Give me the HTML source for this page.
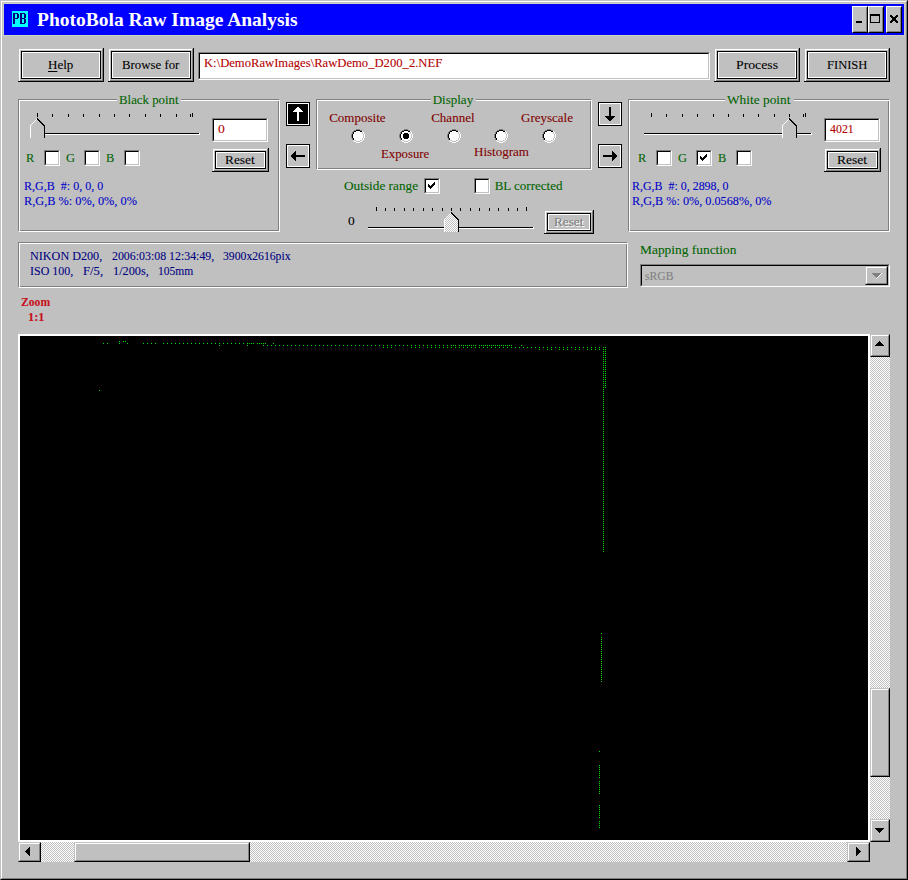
<!DOCTYPE html>
<html><head><meta charset="utf-8">
<style>
*{margin:0;padding:0;box-sizing:border-box}
html,body{width:908px;height:880px;overflow:hidden;background:#c0c0c0}
body{position:relative;font-family:"Liberation Serif",serif;font-size:13px}
.a{position:absolute}
.t{position:absolute;white-space:pre;line-height:15px;font-size:13px;transform-origin:0 0;-webkit-text-stroke:0.1px currentColor}
.bt{position:absolute}
.bt .s{position:absolute;left:0;top:0;right:0;bottom:0;border-right:1px solid #000;border-bottom:1px solid #000}
.bt .g{position:absolute;left:1px;top:1px;right:1px;bottom:1px;border-right:1px solid #808080;border-bottom:1px solid #808080}
.bt .w{position:absolute;left:1px;top:1px;right:2px;bottom:1px;border-left:1px solid #fff;border-top:1px solid #fff}
.bt .k{position:absolute;left:3px;top:3px;right:3px;bottom:3px;border:1px solid #000}
.bt .i{position:absolute;left:4px;top:4px;right:4px;bottom:4px;border:1px solid #fff}
.sk{position:absolute;border-top:1px solid #808080;border-left:1px solid #808080;border-right:1px solid #fff;border-bottom:1px solid #fff}
.sk>.in{position:absolute;left:0;top:0;right:0;bottom:0;border-top:1px solid #000;border-left:1px solid #000;border-right:1px solid #c0c0c0;border-bottom:1px solid #c0c0c0;background:#fff}
.chk{background-image:conic-gradient(#fff 25%,#c0c0c0 0 50%,#fff 0 75%,#c0c0c0 0);background-size:2px 2px}
</style></head><body>
<svg width="0" height="0" style="position:absolute"><defs><pattern id="dith" width="2" height="2" patternUnits="userSpaceOnUse"><rect width="2" height="2" fill="#fff"/><rect width="1" height="1" fill="#c0c0c0"/><rect x="1" y="1" width="1" height="1" fill="#c0c0c0"/></pattern></defs></svg>
<div class="a" style="left:0;top:0;width:908px;height:880px;border-style:solid;border-width:1px;border-color:#c0c0c0 #000 #000 #c0c0c0"></div>
<div class="a" style="left:1px;top:1px;width:906px;height:878px;border-style:solid;border-width:1px;border-color:#fff #808080 #808080 #fff"></div>
<div class="a" style="left:3px;top:3px;width:902px;height:33px;border:1px solid #d0d0c0"></div>
<div class="a" style="left:4px;top:4px;width:900px;height:31px;background:#0000ff"></div>
<div class="a" style="left:12px;top:11px;width:16px;height:16px;background:#00ffff"></div>
<svg class="a" style="left:12px;top:11px" width="16" height="16" viewBox="0 0 16 16" shape-rendering="crispEdges" fill="#000080"><rect x="1" y="2" width="5" height="1"/><rect x="1" y="3" width="2" height="10"/><rect x="5" y="3" width="2" height="4"/><rect x="1" y="7" width="5" height="1"/><rect x="8" y="2" width="5" height="1"/><rect x="8" y="3" width="2" height="10"/><rect x="12" y="3" width="2" height="4"/><rect x="8" y="7" width="5" height="1"/><rect x="12" y="8" width="2" height="4"/><rect x="8" y="12" width="5" height="1"/></svg>
<div class="t" style="left:37px;top:10px;color:#fff;font-weight:bold;font-size:19.5px;line-height:20px;-webkit-text-stroke:0">PhotoBola Raw Image Analysis</div>
<div class="a" style="left:852px;top:6px;width:16px;height:27px;background:#c0c0c0;border-style:solid;border-width:1px;border-color:#fff #000 #000 #fff"></div>
<div class="a" style="left:853px;top:7px;width:14px;height:25px;border-style:solid;border-width:1px;border-color:#c0c0c0 #808080 #808080 #c0c0c0"></div>
<div class="a" style="left:868px;top:6px;width:16px;height:27px;background:#c0c0c0;border-style:solid;border-width:1px;border-color:#fff #000 #000 #fff"></div>
<div class="a" style="left:869px;top:7px;width:14px;height:25px;border-style:solid;border-width:1px;border-color:#c0c0c0 #808080 #808080 #c0c0c0"></div>
<div class="a" style="left:886px;top:6px;width:16px;height:27px;background:#c0c0c0;border-style:solid;border-width:1px;border-color:#fff #000 #000 #fff"></div>
<div class="a" style="left:887px;top:7px;width:14px;height:25px;border-style:solid;border-width:1px;border-color:#c0c0c0 #808080 #808080 #c0c0c0"></div>
<div class="a" style="left:856px;top:21px;width:6px;height:2px;background:#000"></div>
<div class="a" style="left:870px;top:14px;width:10px;height:9px;border:1px solid #000;border-top-width:2px"></div>
<svg class="a" style="left:890px;top:15px" width="8" height="8" viewBox="0 0 8 8" shape-rendering="crispEdges"><path d="M0 0h2v1h1v1h2v-1h1v-1h2v2h-1v1h-1v2h1v1h1v2h-2v-1h-1v-1h-2v1h-1v1h-2v-2h1v-1h1v-2h-1v-1h-1z" fill="#000"/></svg>
<div class="bt" style="left:18px;top:48px;width:86px;height:34px"><div class="s"></div><div class="g"></div><div class="w"></div><div class="k"></div><div class="i"></div></div>
<div class="bt" style="left:108px;top:48px;width:86px;height:34px"><div class="s"></div><div class="g"></div><div class="w"></div><div class="k"></div><div class="i"></div></div>
<div class="sk" style="left:198px;top:52px;width:512px;height:28px"><div class="in" style="background:#fff"></div></div>
<div class="bt" style="left:714px;top:48px;width:86px;height:34px"><div class="s"></div><div class="g"></div><div class="w"></div><div class="k"></div><div class="i"></div></div>
<div class="bt" style="left:804px;top:48px;width:86px;height:34px"><div class="s"></div><div class="g"></div><div class="w"></div><div class="k"></div><div class="i"></div></div>
<div class="a" style="left:18px;top:99px;width:261px;height:132px;border:1px solid #808080"></div>
<div class="a" style="left:19px;top:100px;width:261px;height:132px;border:1px solid #fff"></div>
<div class="a" style="left:117px;top:99px;width:64px;height:3px;background:#c0c0c0"></div>
<div class="a" style="left:37px;top:113px;width:1px;height:4px;background:#000"></div>
<div class="a" style="left:52px;top:114px;width:1px;height:3px;background:#000"></div>
<div class="a" style="left:68px;top:114px;width:1px;height:3px;background:#000"></div>
<div class="a" style="left:83px;top:114px;width:1px;height:3px;background:#000"></div>
<div class="a" style="left:99px;top:114px;width:1px;height:3px;background:#000"></div>
<div class="a" style="left:114px;top:114px;width:1px;height:3px;background:#000"></div>
<div class="a" style="left:129px;top:114px;width:1px;height:3px;background:#000"></div>
<div class="a" style="left:145px;top:114px;width:1px;height:3px;background:#000"></div>
<div class="a" style="left:160px;top:114px;width:1px;height:3px;background:#000"></div>
<div class="a" style="left:176px;top:114px;width:1px;height:3px;background:#000"></div>
<div class="a" style="left:190px;top:114px;width:1px;height:3px;background:#000"></div>
<div class="a" style="left:192px;top:113px;width:1px;height:4px;background:#000"></div>
<div class="a" style="left:34px;top:133px;width:165px;height:1px;background:#000"></div>
<div class="a" style="left:34px;top:134px;width:166px;height:1px;background:#fff"></div>
<div class="a" style="left:199px;top:133px;width:1px;height:1px;background:#fff"></div>
<svg class="a" style="left:30px;top:118px" width="15" height="20" viewBox="0 0 15 20" shape-rendering="crispEdges">
<path d="M7 0h1v1h1v1h1v1h1v1h1v1h1v1h1v1h1v13h-14v-13h1v-1h1v-1h1v-1h1v-1h1v-1h1v-1h1z" fill="#c0c0c0"/>
<path d="M6 1h1v1h-1v1h-1v1h-1v1h-1v1h-1v1h-1v13h-1v-13h1v-1h1v-1h1v-1h1v-1h1v-1h1z" fill="#fff"/>
<path d="M7 0h1v1h1v1h1v1h1v1h1v1h1v1h1v1h1v13h-1v-12h-1v-1h-1v-1h-1v-1h-1v-1h-1v-1h-1z" fill="#000"/>
</svg>
<div class="sk" style="left:212px;top:118px;width:56px;height:24px"><div class="in" style="background:#fff"></div></div>
<div class="bt" style="left:212px;top:148px;width:57px;height:24px"><div class="s"></div><div class="g"></div><div class="w"></div><div class="k"></div><div class="i"></div></div>
<div class="a" style="left:44px;top:150px;width:16px;height:16px;border-style:solid;border-width:1px;border-color:#808080 #fff #fff #808080"></div>
<div class="a" style="left:45px;top:151px;width:14px;height:14px;background:#fff;border-style:solid;border-width:1px;border-color:#000 #c0c0c0 #c0c0c0 #000"></div>
<div class="a" style="left:84px;top:150px;width:16px;height:16px;border-style:solid;border-width:1px;border-color:#808080 #fff #fff #808080"></div>
<div class="a" style="left:85px;top:151px;width:14px;height:14px;background:#fff;border-style:solid;border-width:1px;border-color:#000 #c0c0c0 #c0c0c0 #000"></div>
<div class="a" style="left:124px;top:150px;width:16px;height:16px;border-style:solid;border-width:1px;border-color:#808080 #fff #fff #808080"></div>
<div class="a" style="left:125px;top:151px;width:14px;height:14px;background:#fff;border-style:solid;border-width:1px;border-color:#000 #c0c0c0 #c0c0c0 #000"></div>
<div class="a" style="left:286px;top:102px;width:24px;height:24px;border:1px solid #000;background:#000"></div>
<div class="a" style="left:287px;top:103px;width:22px;height:22px;border:1px solid #fff"></div>
<svg class="a" style="left:286px;top:102px" width="24" height="24" viewBox="0 0 24 24" shape-rendering="crispEdges"><path d="M11 5h2v1h1v1h1v1h1v1h1v1h-4v9h-2v-9h-4v-1h1v-1h1v-1h1v-1h1z" fill="#fff"/></svg>
<div class="a" style="left:286px;top:144px;width:24px;height:24px;border:1px solid #000;background:#c0c0c0"></div>
<div class="a" style="left:287px;top:145px;width:22px;height:22px;border:1px solid #fff"></div>
<svg class="a" style="left:286px;top:144px" width="24" height="24" viewBox="0 0 24 24" shape-rendering="crispEdges"><path d="M5 11h1v-1h1v-1h1v-1h1v-1h1v4h9v2h-9v4h-1v-1h-1v-1h-1v-1h-1v-1h-1z" fill="#000"/></svg>
<div class="a" style="left:598px;top:102px;width:24px;height:24px;border:1px solid #000;background:#c0c0c0"></div>
<div class="a" style="left:599px;top:103px;width:22px;height:22px;border:1px solid #fff"></div>
<svg class="a" style="left:598px;top:102px" width="24" height="24" viewBox="0 0 24 24" shape-rendering="crispEdges"><path d="M11 5h2v9h4v1h-1v1h-1v1h-1v1h-1v1h-2v-1h-1v-1h-1v-1h-1v-1h-1v-1h4z" fill="#000"/></svg>
<div class="a" style="left:598px;top:144px;width:24px;height:24px;border:1px solid #000;background:#c0c0c0"></div>
<div class="a" style="left:599px;top:145px;width:22px;height:22px;border:1px solid #fff"></div>
<svg class="a" style="left:598px;top:144px" width="24" height="24" viewBox="0 0 24 24" shape-rendering="crispEdges"><path d="M5 11h9v-4h1v1h1v1h1v1h1v1h1v2h-1v1h-1v1h-1v1h-1v1h-1v-4h-9z" fill="#000"/></svg>
<div class="a" style="left:316px;top:99px;width:275px;height:70px;border:1px solid #808080"></div>
<div class="a" style="left:317px;top:100px;width:275px;height:70px;border:1px solid #fff"></div>
<div class="a" style="left:431px;top:99px;width:45px;height:3px;background:#c0c0c0"></div>
<svg class="a" style="left:351px;top:129px" width="14" height="14" viewBox="0 0 14 14" shape-rendering="crispEdges"><rect x="5" y="0" width="1" height="1" fill="#808080"/><rect x="6" y="0" width="1" height="1" fill="#808080"/><rect x="7" y="0" width="1" height="1" fill="#808080"/><rect x="8" y="0" width="1" height="1" fill="#808080"/><rect x="3" y="1" width="1" height="1" fill="#808080"/><rect x="4" y="1" width="1" height="1" fill="#808080"/><rect x="9" y="1" width="1" height="1" fill="#808080"/><rect x="10" y="1" width="1" height="1" fill="#808080"/><rect x="2" y="2" width="1" height="1" fill="#808080"/><rect x="11" y="2" width="1" height="1" fill="#fff"/><rect x="1" y="3" width="1" height="1" fill="#808080"/><rect x="12" y="3" width="1" height="1" fill="#fff"/><rect x="1" y="4" width="1" height="1" fill="#808080"/><rect x="12" y="4" width="1" height="1" fill="#fff"/><rect x="0" y="5" width="1" height="1" fill="#808080"/><rect x="13" y="5" width="1" height="1" fill="#fff"/><rect x="0" y="6" width="1" height="1" fill="#808080"/><rect x="13" y="6" width="1" height="1" fill="#fff"/><rect x="0" y="7" width="1" height="1" fill="#808080"/><rect x="13" y="7" width="1" height="1" fill="#fff"/><rect x="0" y="8" width="1" height="1" fill="#808080"/><rect x="13" y="8" width="1" height="1" fill="#fff"/><rect x="1" y="9" width="1" height="1" fill="#808080"/><rect x="12" y="9" width="1" height="1" fill="#fff"/><rect x="1" y="10" width="1" height="1" fill="#808080"/><rect x="12" y="10" width="1" height="1" fill="#fff"/><rect x="2" y="11" width="1" height="1" fill="#fff"/><rect x="11" y="11" width="1" height="1" fill="#fff"/><rect x="3" y="12" width="1" height="1" fill="#fff"/><rect x="4" y="12" width="1" height="1" fill="#fff"/><rect x="9" y="12" width="1" height="1" fill="#fff"/><rect x="10" y="12" width="1" height="1" fill="#fff"/><rect x="5" y="13" width="1" height="1" fill="#fff"/><rect x="6" y="13" width="1" height="1" fill="#fff"/><rect x="7" y="13" width="1" height="1" fill="#fff"/><rect x="8" y="13" width="1" height="1" fill="#fff"/><path d="M5 2h4v1h2v2h1v4h-1v2h-2v1h-4v-1h-2v-2h-1v-4h1v-2h2z" fill="#fff"/><rect x="5" y="1" width="1" height="1" fill="#000"/><rect x="6" y="1" width="1" height="1" fill="#000"/><rect x="7" y="1" width="1" height="1" fill="#000"/><rect x="8" y="1" width="1" height="1" fill="#000"/><rect x="3" y="2" width="1" height="1" fill="#000"/><rect x="4" y="2" width="1" height="1" fill="#000"/><rect x="9" y="2" width="1" height="1" fill="#000"/><rect x="10" y="2" width="1" height="1" fill="#000"/><rect x="2" y="3" width="1" height="1" fill="#000"/><rect x="11" y="3" width="1" height="1" fill="#c0c0c0"/><rect x="2" y="4" width="1" height="1" fill="#000"/><rect x="11" y="4" width="1" height="1" fill="#c0c0c0"/><rect x="1" y="5" width="1" height="1" fill="#000"/><rect x="12" y="5" width="1" height="1" fill="#c0c0c0"/><rect x="1" y="6" width="1" height="1" fill="#000"/><rect x="12" y="6" width="1" height="1" fill="#c0c0c0"/><rect x="1" y="7" width="1" height="1" fill="#000"/><rect x="12" y="7" width="1" height="1" fill="#c0c0c0"/><rect x="1" y="8" width="1" height="1" fill="#000"/><rect x="12" y="8" width="1" height="1" fill="#c0c0c0"/><rect x="2" y="9" width="1" height="1" fill="#000"/><rect x="11" y="9" width="1" height="1" fill="#c0c0c0"/><rect x="2" y="10" width="1" height="1" fill="#000"/><rect x="11" y="10" width="1" height="1" fill="#c0c0c0"/><rect x="3" y="11" width="1" height="1" fill="#c0c0c0"/><rect x="4" y="11" width="1" height="1" fill="#c0c0c0"/><rect x="9" y="11" width="1" height="1" fill="#c0c0c0"/><rect x="10" y="11" width="1" height="1" fill="#c0c0c0"/><rect x="5" y="12" width="1" height="1" fill="#c0c0c0"/><rect x="6" y="12" width="1" height="1" fill="#c0c0c0"/><rect x="7" y="12" width="1" height="1" fill="#c0c0c0"/><rect x="8" y="12" width="1" height="1" fill="#c0c0c0"/></svg>
<svg class="a" style="left:399px;top:129px" width="14" height="14" viewBox="0 0 14 14" shape-rendering="crispEdges"><rect x="5" y="0" width="1" height="1" fill="#808080"/><rect x="6" y="0" width="1" height="1" fill="#808080"/><rect x="7" y="0" width="1" height="1" fill="#808080"/><rect x="8" y="0" width="1" height="1" fill="#808080"/><rect x="3" y="1" width="1" height="1" fill="#808080"/><rect x="4" y="1" width="1" height="1" fill="#808080"/><rect x="9" y="1" width="1" height="1" fill="#808080"/><rect x="10" y="1" width="1" height="1" fill="#808080"/><rect x="2" y="2" width="1" height="1" fill="#808080"/><rect x="11" y="2" width="1" height="1" fill="#fff"/><rect x="1" y="3" width="1" height="1" fill="#808080"/><rect x="12" y="3" width="1" height="1" fill="#fff"/><rect x="1" y="4" width="1" height="1" fill="#808080"/><rect x="12" y="4" width="1" height="1" fill="#fff"/><rect x="0" y="5" width="1" height="1" fill="#808080"/><rect x="13" y="5" width="1" height="1" fill="#fff"/><rect x="0" y="6" width="1" height="1" fill="#808080"/><rect x="13" y="6" width="1" height="1" fill="#fff"/><rect x="0" y="7" width="1" height="1" fill="#808080"/><rect x="13" y="7" width="1" height="1" fill="#fff"/><rect x="0" y="8" width="1" height="1" fill="#808080"/><rect x="13" y="8" width="1" height="1" fill="#fff"/><rect x="1" y="9" width="1" height="1" fill="#808080"/><rect x="12" y="9" width="1" height="1" fill="#fff"/><rect x="1" y="10" width="1" height="1" fill="#808080"/><rect x="12" y="10" width="1" height="1" fill="#fff"/><rect x="2" y="11" width="1" height="1" fill="#fff"/><rect x="11" y="11" width="1" height="1" fill="#fff"/><rect x="3" y="12" width="1" height="1" fill="#fff"/><rect x="4" y="12" width="1" height="1" fill="#fff"/><rect x="9" y="12" width="1" height="1" fill="#fff"/><rect x="10" y="12" width="1" height="1" fill="#fff"/><rect x="5" y="13" width="1" height="1" fill="#fff"/><rect x="6" y="13" width="1" height="1" fill="#fff"/><rect x="7" y="13" width="1" height="1" fill="#fff"/><rect x="8" y="13" width="1" height="1" fill="#fff"/><path d="M5 2h4v1h2v2h1v4h-1v2h-2v1h-4v-1h-2v-2h-1v-4h1v-2h2z" fill="#fff"/><rect x="5" y="1" width="1" height="1" fill="#000"/><rect x="6" y="1" width="1" height="1" fill="#000"/><rect x="7" y="1" width="1" height="1" fill="#000"/><rect x="8" y="1" width="1" height="1" fill="#000"/><rect x="3" y="2" width="1" height="1" fill="#000"/><rect x="4" y="2" width="1" height="1" fill="#000"/><rect x="9" y="2" width="1" height="1" fill="#000"/><rect x="10" y="2" width="1" height="1" fill="#000"/><rect x="2" y="3" width="1" height="1" fill="#000"/><rect x="11" y="3" width="1" height="1" fill="#c0c0c0"/><rect x="2" y="4" width="1" height="1" fill="#000"/><rect x="11" y="4" width="1" height="1" fill="#c0c0c0"/><rect x="1" y="5" width="1" height="1" fill="#000"/><rect x="12" y="5" width="1" height="1" fill="#c0c0c0"/><rect x="1" y="6" width="1" height="1" fill="#000"/><rect x="12" y="6" width="1" height="1" fill="#c0c0c0"/><rect x="1" y="7" width="1" height="1" fill="#000"/><rect x="12" y="7" width="1" height="1" fill="#c0c0c0"/><rect x="1" y="8" width="1" height="1" fill="#000"/><rect x="12" y="8" width="1" height="1" fill="#c0c0c0"/><rect x="2" y="9" width="1" height="1" fill="#000"/><rect x="11" y="9" width="1" height="1" fill="#c0c0c0"/><rect x="2" y="10" width="1" height="1" fill="#000"/><rect x="11" y="10" width="1" height="1" fill="#c0c0c0"/><rect x="3" y="11" width="1" height="1" fill="#c0c0c0"/><rect x="4" y="11" width="1" height="1" fill="#c0c0c0"/><rect x="9" y="11" width="1" height="1" fill="#c0c0c0"/><rect x="10" y="11" width="1" height="1" fill="#c0c0c0"/><rect x="5" y="12" width="1" height="1" fill="#c0c0c0"/><rect x="6" y="12" width="1" height="1" fill="#c0c0c0"/><rect x="7" y="12" width="1" height="1" fill="#c0c0c0"/><rect x="8" y="12" width="1" height="1" fill="#c0c0c0"/><path d="M5 4h4v1h1v4h-1v1h-4v-1h-1v-4h1z" fill="#000"/></svg>
<svg class="a" style="left:447px;top:129px" width="14" height="14" viewBox="0 0 14 14" shape-rendering="crispEdges"><rect x="5" y="0" width="1" height="1" fill="#808080"/><rect x="6" y="0" width="1" height="1" fill="#808080"/><rect x="7" y="0" width="1" height="1" fill="#808080"/><rect x="8" y="0" width="1" height="1" fill="#808080"/><rect x="3" y="1" width="1" height="1" fill="#808080"/><rect x="4" y="1" width="1" height="1" fill="#808080"/><rect x="9" y="1" width="1" height="1" fill="#808080"/><rect x="10" y="1" width="1" height="1" fill="#808080"/><rect x="2" y="2" width="1" height="1" fill="#808080"/><rect x="11" y="2" width="1" height="1" fill="#fff"/><rect x="1" y="3" width="1" height="1" fill="#808080"/><rect x="12" y="3" width="1" height="1" fill="#fff"/><rect x="1" y="4" width="1" height="1" fill="#808080"/><rect x="12" y="4" width="1" height="1" fill="#fff"/><rect x="0" y="5" width="1" height="1" fill="#808080"/><rect x="13" y="5" width="1" height="1" fill="#fff"/><rect x="0" y="6" width="1" height="1" fill="#808080"/><rect x="13" y="6" width="1" height="1" fill="#fff"/><rect x="0" y="7" width="1" height="1" fill="#808080"/><rect x="13" y="7" width="1" height="1" fill="#fff"/><rect x="0" y="8" width="1" height="1" fill="#808080"/><rect x="13" y="8" width="1" height="1" fill="#fff"/><rect x="1" y="9" width="1" height="1" fill="#808080"/><rect x="12" y="9" width="1" height="1" fill="#fff"/><rect x="1" y="10" width="1" height="1" fill="#808080"/><rect x="12" y="10" width="1" height="1" fill="#fff"/><rect x="2" y="11" width="1" height="1" fill="#fff"/><rect x="11" y="11" width="1" height="1" fill="#fff"/><rect x="3" y="12" width="1" height="1" fill="#fff"/><rect x="4" y="12" width="1" height="1" fill="#fff"/><rect x="9" y="12" width="1" height="1" fill="#fff"/><rect x="10" y="12" width="1" height="1" fill="#fff"/><rect x="5" y="13" width="1" height="1" fill="#fff"/><rect x="6" y="13" width="1" height="1" fill="#fff"/><rect x="7" y="13" width="1" height="1" fill="#fff"/><rect x="8" y="13" width="1" height="1" fill="#fff"/><path d="M5 2h4v1h2v2h1v4h-1v2h-2v1h-4v-1h-2v-2h-1v-4h1v-2h2z" fill="#fff"/><rect x="5" y="1" width="1" height="1" fill="#000"/><rect x="6" y="1" width="1" height="1" fill="#000"/><rect x="7" y="1" width="1" height="1" fill="#000"/><rect x="8" y="1" width="1" height="1" fill="#000"/><rect x="3" y="2" width="1" height="1" fill="#000"/><rect x="4" y="2" width="1" height="1" fill="#000"/><rect x="9" y="2" width="1" height="1" fill="#000"/><rect x="10" y="2" width="1" height="1" fill="#000"/><rect x="2" y="3" width="1" height="1" fill="#000"/><rect x="11" y="3" width="1" height="1" fill="#c0c0c0"/><rect x="2" y="4" width="1" height="1" fill="#000"/><rect x="11" y="4" width="1" height="1" fill="#c0c0c0"/><rect x="1" y="5" width="1" height="1" fill="#000"/><rect x="12" y="5" width="1" height="1" fill="#c0c0c0"/><rect x="1" y="6" width="1" height="1" fill="#000"/><rect x="12" y="6" width="1" height="1" fill="#c0c0c0"/><rect x="1" y="7" width="1" height="1" fill="#000"/><rect x="12" y="7" width="1" height="1" fill="#c0c0c0"/><rect x="1" y="8" width="1" height="1" fill="#000"/><rect x="12" y="8" width="1" height="1" fill="#c0c0c0"/><rect x="2" y="9" width="1" height="1" fill="#000"/><rect x="11" y="9" width="1" height="1" fill="#c0c0c0"/><rect x="2" y="10" width="1" height="1" fill="#000"/><rect x="11" y="10" width="1" height="1" fill="#c0c0c0"/><rect x="3" y="11" width="1" height="1" fill="#c0c0c0"/><rect x="4" y="11" width="1" height="1" fill="#c0c0c0"/><rect x="9" y="11" width="1" height="1" fill="#c0c0c0"/><rect x="10" y="11" width="1" height="1" fill="#c0c0c0"/><rect x="5" y="12" width="1" height="1" fill="#c0c0c0"/><rect x="6" y="12" width="1" height="1" fill="#c0c0c0"/><rect x="7" y="12" width="1" height="1" fill="#c0c0c0"/><rect x="8" y="12" width="1" height="1" fill="#c0c0c0"/></svg>
<svg class="a" style="left:494px;top:129px" width="14" height="14" viewBox="0 0 14 14" shape-rendering="crispEdges"><rect x="5" y="0" width="1" height="1" fill="#808080"/><rect x="6" y="0" width="1" height="1" fill="#808080"/><rect x="7" y="0" width="1" height="1" fill="#808080"/><rect x="8" y="0" width="1" height="1" fill="#808080"/><rect x="3" y="1" width="1" height="1" fill="#808080"/><rect x="4" y="1" width="1" height="1" fill="#808080"/><rect x="9" y="1" width="1" height="1" fill="#808080"/><rect x="10" y="1" width="1" height="1" fill="#808080"/><rect x="2" y="2" width="1" height="1" fill="#808080"/><rect x="11" y="2" width="1" height="1" fill="#fff"/><rect x="1" y="3" width="1" height="1" fill="#808080"/><rect x="12" y="3" width="1" height="1" fill="#fff"/><rect x="1" y="4" width="1" height="1" fill="#808080"/><rect x="12" y="4" width="1" height="1" fill="#fff"/><rect x="0" y="5" width="1" height="1" fill="#808080"/><rect x="13" y="5" width="1" height="1" fill="#fff"/><rect x="0" y="6" width="1" height="1" fill="#808080"/><rect x="13" y="6" width="1" height="1" fill="#fff"/><rect x="0" y="7" width="1" height="1" fill="#808080"/><rect x="13" y="7" width="1" height="1" fill="#fff"/><rect x="0" y="8" width="1" height="1" fill="#808080"/><rect x="13" y="8" width="1" height="1" fill="#fff"/><rect x="1" y="9" width="1" height="1" fill="#808080"/><rect x="12" y="9" width="1" height="1" fill="#fff"/><rect x="1" y="10" width="1" height="1" fill="#808080"/><rect x="12" y="10" width="1" height="1" fill="#fff"/><rect x="2" y="11" width="1" height="1" fill="#fff"/><rect x="11" y="11" width="1" height="1" fill="#fff"/><rect x="3" y="12" width="1" height="1" fill="#fff"/><rect x="4" y="12" width="1" height="1" fill="#fff"/><rect x="9" y="12" width="1" height="1" fill="#fff"/><rect x="10" y="12" width="1" height="1" fill="#fff"/><rect x="5" y="13" width="1" height="1" fill="#fff"/><rect x="6" y="13" width="1" height="1" fill="#fff"/><rect x="7" y="13" width="1" height="1" fill="#fff"/><rect x="8" y="13" width="1" height="1" fill="#fff"/><path d="M5 2h4v1h2v2h1v4h-1v2h-2v1h-4v-1h-2v-2h-1v-4h1v-2h2z" fill="#fff"/><rect x="5" y="1" width="1" height="1" fill="#000"/><rect x="6" y="1" width="1" height="1" fill="#000"/><rect x="7" y="1" width="1" height="1" fill="#000"/><rect x="8" y="1" width="1" height="1" fill="#000"/><rect x="3" y="2" width="1" height="1" fill="#000"/><rect x="4" y="2" width="1" height="1" fill="#000"/><rect x="9" y="2" width="1" height="1" fill="#000"/><rect x="10" y="2" width="1" height="1" fill="#000"/><rect x="2" y="3" width="1" height="1" fill="#000"/><rect x="11" y="3" width="1" height="1" fill="#c0c0c0"/><rect x="2" y="4" width="1" height="1" fill="#000"/><rect x="11" y="4" width="1" height="1" fill="#c0c0c0"/><rect x="1" y="5" width="1" height="1" fill="#000"/><rect x="12" y="5" width="1" height="1" fill="#c0c0c0"/><rect x="1" y="6" width="1" height="1" fill="#000"/><rect x="12" y="6" width="1" height="1" fill="#c0c0c0"/><rect x="1" y="7" width="1" height="1" fill="#000"/><rect x="12" y="7" width="1" height="1" fill="#c0c0c0"/><rect x="1" y="8" width="1" height="1" fill="#000"/><rect x="12" y="8" width="1" height="1" fill="#c0c0c0"/><rect x="2" y="9" width="1" height="1" fill="#000"/><rect x="11" y="9" width="1" height="1" fill="#c0c0c0"/><rect x="2" y="10" width="1" height="1" fill="#000"/><rect x="11" y="10" width="1" height="1" fill="#c0c0c0"/><rect x="3" y="11" width="1" height="1" fill="#c0c0c0"/><rect x="4" y="11" width="1" height="1" fill="#c0c0c0"/><rect x="9" y="11" width="1" height="1" fill="#c0c0c0"/><rect x="10" y="11" width="1" height="1" fill="#c0c0c0"/><rect x="5" y="12" width="1" height="1" fill="#c0c0c0"/><rect x="6" y="12" width="1" height="1" fill="#c0c0c0"/><rect x="7" y="12" width="1" height="1" fill="#c0c0c0"/><rect x="8" y="12" width="1" height="1" fill="#c0c0c0"/></svg>
<svg class="a" style="left:542px;top:129px" width="14" height="14" viewBox="0 0 14 14" shape-rendering="crispEdges"><rect x="5" y="0" width="1" height="1" fill="#808080"/><rect x="6" y="0" width="1" height="1" fill="#808080"/><rect x="7" y="0" width="1" height="1" fill="#808080"/><rect x="8" y="0" width="1" height="1" fill="#808080"/><rect x="3" y="1" width="1" height="1" fill="#808080"/><rect x="4" y="1" width="1" height="1" fill="#808080"/><rect x="9" y="1" width="1" height="1" fill="#808080"/><rect x="10" y="1" width="1" height="1" fill="#808080"/><rect x="2" y="2" width="1" height="1" fill="#808080"/><rect x="11" y="2" width="1" height="1" fill="#fff"/><rect x="1" y="3" width="1" height="1" fill="#808080"/><rect x="12" y="3" width="1" height="1" fill="#fff"/><rect x="1" y="4" width="1" height="1" fill="#808080"/><rect x="12" y="4" width="1" height="1" fill="#fff"/><rect x="0" y="5" width="1" height="1" fill="#808080"/><rect x="13" y="5" width="1" height="1" fill="#fff"/><rect x="0" y="6" width="1" height="1" fill="#808080"/><rect x="13" y="6" width="1" height="1" fill="#fff"/><rect x="0" y="7" width="1" height="1" fill="#808080"/><rect x="13" y="7" width="1" height="1" fill="#fff"/><rect x="0" y="8" width="1" height="1" fill="#808080"/><rect x="13" y="8" width="1" height="1" fill="#fff"/><rect x="1" y="9" width="1" height="1" fill="#808080"/><rect x="12" y="9" width="1" height="1" fill="#fff"/><rect x="1" y="10" width="1" height="1" fill="#808080"/><rect x="12" y="10" width="1" height="1" fill="#fff"/><rect x="2" y="11" width="1" height="1" fill="#fff"/><rect x="11" y="11" width="1" height="1" fill="#fff"/><rect x="3" y="12" width="1" height="1" fill="#fff"/><rect x="4" y="12" width="1" height="1" fill="#fff"/><rect x="9" y="12" width="1" height="1" fill="#fff"/><rect x="10" y="12" width="1" height="1" fill="#fff"/><rect x="5" y="13" width="1" height="1" fill="#fff"/><rect x="6" y="13" width="1" height="1" fill="#fff"/><rect x="7" y="13" width="1" height="1" fill="#fff"/><rect x="8" y="13" width="1" height="1" fill="#fff"/><path d="M5 2h4v1h2v2h1v4h-1v2h-2v1h-4v-1h-2v-2h-1v-4h1v-2h2z" fill="#fff"/><rect x="5" y="1" width="1" height="1" fill="#000"/><rect x="6" y="1" width="1" height="1" fill="#000"/><rect x="7" y="1" width="1" height="1" fill="#000"/><rect x="8" y="1" width="1" height="1" fill="#000"/><rect x="3" y="2" width="1" height="1" fill="#000"/><rect x="4" y="2" width="1" height="1" fill="#000"/><rect x="9" y="2" width="1" height="1" fill="#000"/><rect x="10" y="2" width="1" height="1" fill="#000"/><rect x="2" y="3" width="1" height="1" fill="#000"/><rect x="11" y="3" width="1" height="1" fill="#c0c0c0"/><rect x="2" y="4" width="1" height="1" fill="#000"/><rect x="11" y="4" width="1" height="1" fill="#c0c0c0"/><rect x="1" y="5" width="1" height="1" fill="#000"/><rect x="12" y="5" width="1" height="1" fill="#c0c0c0"/><rect x="1" y="6" width="1" height="1" fill="#000"/><rect x="12" y="6" width="1" height="1" fill="#c0c0c0"/><rect x="1" y="7" width="1" height="1" fill="#000"/><rect x="12" y="7" width="1" height="1" fill="#c0c0c0"/><rect x="1" y="8" width="1" height="1" fill="#000"/><rect x="12" y="8" width="1" height="1" fill="#c0c0c0"/><rect x="2" y="9" width="1" height="1" fill="#000"/><rect x="11" y="9" width="1" height="1" fill="#c0c0c0"/><rect x="2" y="10" width="1" height="1" fill="#000"/><rect x="11" y="10" width="1" height="1" fill="#c0c0c0"/><rect x="3" y="11" width="1" height="1" fill="#c0c0c0"/><rect x="4" y="11" width="1" height="1" fill="#c0c0c0"/><rect x="9" y="11" width="1" height="1" fill="#c0c0c0"/><rect x="10" y="11" width="1" height="1" fill="#c0c0c0"/><rect x="5" y="12" width="1" height="1" fill="#c0c0c0"/><rect x="6" y="12" width="1" height="1" fill="#c0c0c0"/><rect x="7" y="12" width="1" height="1" fill="#c0c0c0"/><rect x="8" y="12" width="1" height="1" fill="#c0c0c0"/></svg>
<div class="a" style="left:424px;top:178px;width:16px;height:16px;border-style:solid;border-width:1px;border-color:#808080 #fff #fff #808080"></div>
<div class="a" style="left:425px;top:179px;width:14px;height:14px;background:#fff;border-style:solid;border-width:1px;border-color:#000 #c0c0c0 #c0c0c0 #000"></div>
<svg class="a" style="left:424px;top:178px" width="16" height="16" viewBox="0 0 16 16" shape-rendering="crispEdges" fill="#000"><rect x="4" y="6" width="1" height="3"/><rect x="5" y="7" width="1" height="3"/><rect x="6" y="8" width="1" height="3"/><rect x="7" y="7" width="1" height="3"/><rect x="8" y="6" width="1" height="3"/><rect x="9" y="5" width="1" height="3"/><rect x="10" y="4" width="1" height="3"/></svg>
<div class="a" style="left:474px;top:178px;width:16px;height:16px;border-style:solid;border-width:1px;border-color:#808080 #fff #fff #808080"></div>
<div class="a" style="left:475px;top:179px;width:14px;height:14px;background:#fff;border-style:solid;border-width:1px;border-color:#000 #c0c0c0 #c0c0c0 #000"></div>
<div class="a" style="left:376px;top:207px;width:1px;height:4px;background:#000"></div>
<div class="a" style="left:385px;top:208px;width:1px;height:3px;background:#000"></div>
<div class="a" style="left:394px;top:208px;width:1px;height:3px;background:#000"></div>
<div class="a" style="left:404px;top:208px;width:1px;height:3px;background:#000"></div>
<div class="a" style="left:413px;top:208px;width:1px;height:3px;background:#000"></div>
<div class="a" style="left:423px;top:208px;width:1px;height:3px;background:#000"></div>
<div class="a" style="left:432px;top:208px;width:1px;height:3px;background:#000"></div>
<div class="a" style="left:442px;top:208px;width:1px;height:3px;background:#000"></div>
<div class="a" style="left:451px;top:208px;width:1px;height:3px;background:#000"></div>
<div class="a" style="left:460px;top:208px;width:1px;height:3px;background:#000"></div>
<div class="a" style="left:470px;top:208px;width:1px;height:3px;background:#000"></div>
<div class="a" style="left:479px;top:208px;width:1px;height:3px;background:#000"></div>
<div class="a" style="left:489px;top:208px;width:1px;height:3px;background:#000"></div>
<div class="a" style="left:498px;top:208px;width:1px;height:3px;background:#000"></div>
<div class="a" style="left:508px;top:208px;width:1px;height:3px;background:#000"></div>
<div class="a" style="left:517px;top:208px;width:1px;height:3px;background:#000"></div>
<div class="a" style="left:526px;top:207px;width:1px;height:4px;background:#000"></div>
<div class="a" style="left:368px;top:227px;width:165px;height:1px;background:#000"></div>
<div class="a" style="left:368px;top:228px;width:166px;height:1px;background:#fff"></div>
<div class="a" style="left:533px;top:227px;width:1px;height:1px;background:#fff"></div>
<svg class="a" style="left:444px;top:212px" width="15" height="20" viewBox="0 0 15 20" shape-rendering="crispEdges">
<path d="M7 0h1v1h1v1h1v1h1v1h1v1h1v1h1v1h1v13h-14v-13h1v-1h1v-1h1v-1h1v-1h1v-1h1v-1h1z" fill="url(#dith)"/>
<path d="M6 1h1v1h-1v1h-1v1h-1v1h-1v1h-1v1h-1v13h-1v-13h1v-1h1v-1h1v-1h1v-1h1v-1h1z" fill="#fff"/>
<path d="M7 0h1v1h1v1h1v1h1v1h1v1h1v1h1v1h1v13h-1v-12h-1v-1h-1v-1h-1v-1h-1v-1h-1v-1h-1z" fill="#000"/>
</svg>
<div class="bt" style="left:544px;top:210px;width:50px;height:24px"><div class="s"></div><div class="g"></div><div class="w"></div><div class="k"></div><div class="i"></div></div>
<div class="a" style="left:628px;top:99px;width:261px;height:132px;border:1px solid #808080"></div>
<div class="a" style="left:629px;top:100px;width:261px;height:132px;border:1px solid #fff"></div>
<div class="a" style="left:725px;top:99px;width:69px;height:3px;background:#c0c0c0"></div>
<div class="a" style="left:651px;top:113px;width:1px;height:4px;background:#000"></div>
<div class="a" style="left:666px;top:114px;width:1px;height:3px;background:#000"></div>
<div class="a" style="left:682px;top:114px;width:1px;height:3px;background:#000"></div>
<div class="a" style="left:697px;top:114px;width:1px;height:3px;background:#000"></div>
<div class="a" style="left:713px;top:114px;width:1px;height:3px;background:#000"></div>
<div class="a" style="left:728px;top:114px;width:1px;height:3px;background:#000"></div>
<div class="a" style="left:743px;top:114px;width:1px;height:3px;background:#000"></div>
<div class="a" style="left:758px;top:114px;width:1px;height:3px;background:#000"></div>
<div class="a" style="left:774px;top:114px;width:1px;height:3px;background:#000"></div>
<div class="a" style="left:789px;top:114px;width:1px;height:3px;background:#000"></div>
<div class="a" style="left:803px;top:114px;width:1px;height:3px;background:#000"></div>
<div class="a" style="left:805px;top:113px;width:1px;height:4px;background:#000"></div>
<div class="a" style="left:644px;top:133px;width:167px;height:1px;background:#000"></div>
<div class="a" style="left:644px;top:134px;width:168px;height:1px;background:#fff"></div>
<div class="a" style="left:811px;top:133px;width:1px;height:1px;background:#fff"></div>
<svg class="a" style="left:782px;top:118px" width="15" height="20" viewBox="0 0 15 20" shape-rendering="crispEdges">
<path d="M7 0h1v1h1v1h1v1h1v1h1v1h1v1h1v1h1v13h-14v-13h1v-1h1v-1h1v-1h1v-1h1v-1h1v-1h1z" fill="#c0c0c0"/>
<path d="M6 1h1v1h-1v1h-1v1h-1v1h-1v1h-1v1h-1v13h-1v-13h1v-1h1v-1h1v-1h1v-1h1v-1h1z" fill="#fff"/>
<path d="M7 0h1v1h1v1h1v1h1v1h1v1h1v1h1v1h1v13h-1v-12h-1v-1h-1v-1h-1v-1h-1v-1h-1v-1h-1z" fill="#000"/>
</svg>
<div class="sk" style="left:824px;top:118px;width:56px;height:24px"><div class="in" style="background:#fff"></div></div>
<div class="bt" style="left:824px;top:148px;width:57px;height:24px"><div class="s"></div><div class="g"></div><div class="w"></div><div class="k"></div><div class="i"></div></div>
<div class="a" style="left:656px;top:150px;width:16px;height:16px;border-style:solid;border-width:1px;border-color:#808080 #fff #fff #808080"></div>
<div class="a" style="left:657px;top:151px;width:14px;height:14px;background:#fff;border-style:solid;border-width:1px;border-color:#000 #c0c0c0 #c0c0c0 #000"></div>
<div class="a" style="left:696px;top:150px;width:16px;height:16px;border-style:solid;border-width:1px;border-color:#808080 #fff #fff #808080"></div>
<div class="a" style="left:697px;top:151px;width:14px;height:14px;background:#fff;border-style:solid;border-width:1px;border-color:#000 #c0c0c0 #c0c0c0 #000"></div>
<svg class="a" style="left:696px;top:150px" width="16" height="16" viewBox="0 0 16 16" shape-rendering="crispEdges" fill="#000"><rect x="4" y="6" width="1" height="3"/><rect x="5" y="7" width="1" height="3"/><rect x="6" y="8" width="1" height="3"/><rect x="7" y="7" width="1" height="3"/><rect x="8" y="6" width="1" height="3"/><rect x="9" y="5" width="1" height="3"/><rect x="10" y="4" width="1" height="3"/></svg>
<div class="a" style="left:736px;top:150px;width:16px;height:16px;border-style:solid;border-width:1px;border-color:#808080 #fff #fff #808080"></div>
<div class="a" style="left:737px;top:151px;width:14px;height:14px;background:#fff;border-style:solid;border-width:1px;border-color:#000 #c0c0c0 #c0c0c0 #000"></div>
<div class="a" style="left:18px;top:242px;width:609px;height:45px;border:1px solid #808080"></div>
<div class="a" style="left:19px;top:243px;width:609px;height:45px;border:1px solid #fff"></div>
<div class="sk" style="left:640px;top:264px;width:250px;height:23px"><div class="in" style="background:#c0c0c0"></div></div>
<div class="a" style="left:865px;top:266px;width:23px;height:19px;background:#c0c0c0;border-style:solid;border-width:1px;border-color:#c0c0c0 #000 #000 #c0c0c0"></div>
<div class="a" style="left:866px;top:267px;width:21px;height:17px;border-style:solid;border-width:1px;border-color:#fff #808080 #808080 #fff"></div>
<svg class="a" style="left:871px;top:272px" width="12" height="8" viewBox="0 0 12 8" shape-rendering="crispEdges"><path d="M1 1h9v1h-1v1h-1v1h-1v1h-1v1h-1v-1h-1v-1h-1v-1h-1v-1h-1z" fill="#808080"/><path d="M10 1h1v1h-1v1h-1v1h-1v1h-1v1h-1v1h-1v-1h1v-1h1v-1h1v-1h1v-1h1z" fill="#fff"/></svg>
<div class="a" style="left:18px;top:334px;width:852px;height:508px;background:#fff"></div>
<div class="a" style="left:20px;top:336px;width:848px;height:504px;background:#000"></div>
<svg class="a" style="left:0;top:0" width="908" height="880" viewBox="0 0 908 880" shape-rendering="crispEdges"><path d="M99 390h1v1h-1zM103 343h1v1h-1zM107 343h1v1h-1zM119 341h1v1h-1zM119 343h1v1h-1zM123 341h1v1h-1zM125 341h1v1h-1zM127 343h1v1h-1zM143 343h1v1h-1zM147 343h1v1h-1zM151 343h1v1h-1zM155 343h1v1h-1zM163 343h1v1h-1zM167 343h1v1h-1zM171 343h1v1h-1zM175 343h1v1h-1zM179 343h1v1h-1zM183 343h1v1h-1zM187 343h1v1h-1zM191 343h1v1h-1zM195 343h1v1h-1zM199 343h1v1h-1zM203 343h1v1h-1zM207 343h1v1h-1zM211 343h1v1h-1zM215 343h1v1h-1zM219 343h1v1h-1zM219 345h1v1h-1zM223 343h1v1h-1zM227 343h1v1h-1zM231 343h1v1h-1zM235 343h1v1h-1zM239 343h1v1h-1zM243 343h1v1h-1zM247 343h1v1h-1zM247 345h1v1h-1zM249 343h1v1h-1zM251 343h1v1h-1zM253 343h1v1h-1zM257 343h1v1h-1zM259 343h1v1h-1zM261 343h1v1h-1zM263 343h1v1h-1zM263 345h1v1h-1zM265 343h1v1h-1zM267 345h1v1h-1zM271 345h1v1h-1zM273 343h1v1h-1zM275 345h1v1h-1zM279 345h1v1h-1zM283 345h1v1h-1zM287 345h1v1h-1zM291 345h1v1h-1zM295 345h1v1h-1zM299 345h1v1h-1zM303 345h1v1h-1zM307 345h1v1h-1zM311 345h1v1h-1zM315 345h1v1h-1zM319 345h1v1h-1zM323 345h1v1h-1zM327 345h1v1h-1zM331 345h1v1h-1zM335 345h1v1h-1zM339 345h1v1h-1zM343 345h1v1h-1zM347 345h1v1h-1zM351 345h1v1h-1zM355 345h1v1h-1zM359 345h1v1h-1zM363 345h1v1h-1zM367 345h1v1h-1zM371 345h1v1h-1zM375 345h1v1h-1zM379 345h1v1h-1zM383 345h1v1h-1zM383 347h1v1h-1zM387 345h1v1h-1zM387 347h1v1h-1zM391 345h1v1h-1zM391 347h1v1h-1zM395 345h1v1h-1zM399 345h1v1h-1zM403 345h1v1h-1zM407 345h1v1h-1zM411 345h1v1h-1zM411 347h1v1h-1zM415 345h1v1h-1zM415 347h1v1h-1zM419 345h1v1h-1zM419 347h1v1h-1zM423 345h1v1h-1zM427 345h1v1h-1zM427 347h1v1h-1zM431 345h1v1h-1zM431 347h1v1h-1zM435 345h1v1h-1zM435 347h1v1h-1zM439 345h1v1h-1zM439 347h1v1h-1zM443 345h1v1h-1zM443 347h1v1h-1zM447 345h1v1h-1zM447 347h1v1h-1zM451 345h1v1h-1zM451 347h1v1h-1zM453 345h1v1h-1zM455 345h1v1h-1zM455 347h1v1h-1zM459 345h1v1h-1zM459 347h1v1h-1zM461 345h1v1h-1zM463 345h1v1h-1zM463 347h1v1h-1zM465 345h1v1h-1zM467 345h1v1h-1zM467 347h1v1h-1zM469 345h1v1h-1zM471 345h1v1h-1zM471 347h1v1h-1zM473 345h1v1h-1zM475 345h1v1h-1zM475 347h1v1h-1zM479 345h1v1h-1zM479 347h1v1h-1zM481 345h1v1h-1zM483 345h1v1h-1zM483 347h1v1h-1zM485 345h1v1h-1zM487 345h1v1h-1zM487 347h1v1h-1zM489 345h1v1h-1zM491 345h1v1h-1zM491 347h1v1h-1zM493 345h1v1h-1zM495 345h1v1h-1zM495 347h1v1h-1zM497 345h1v1h-1zM499 345h1v1h-1zM499 347h1v1h-1zM501 345h1v1h-1zM503 345h1v1h-1zM503 347h1v1h-1zM505 345h1v1h-1zM507 345h1v1h-1zM507 347h1v1h-1zM509 345h1v1h-1zM511 345h1v1h-1zM511 347h1v1h-1zM515 347h1v1h-1zM519 347h1v1h-1zM521 345h1v1h-1zM523 347h1v1h-1zM527 347h1v1h-1zM531 347h1v1h-1zM535 347h1v1h-1zM539 347h1v1h-1zM539 349h1v1h-1zM543 347h1v1h-1zM547 347h1v1h-1zM547 349h1v1h-1zM551 347h1v1h-1zM551 349h1v1h-1zM555 347h1v1h-1zM559 347h1v1h-1zM559 349h1v1h-1zM563 347h1v1h-1zM563 349h1v1h-1zM567 347h1v1h-1zM567 349h1v1h-1zM571 347h1v1h-1zM575 347h1v1h-1zM575 349h1v1h-1zM579 347h1v1h-1zM579 349h1v1h-1zM583 347h1v1h-1zM587 347h1v1h-1zM587 349h1v1h-1zM591 347h1v1h-1zM591 349h1v1h-1zM595 347h1v1h-1zM595 349h1v1h-1zM599 347h1v1h-1zM599 349h1v1h-1zM599 751h1v1h-1zM599 765h1v1h-1zM599 767h1v1h-1zM599 769h1v1h-1zM599 771h1v1h-1zM599 773h1v1h-1zM599 775h1v1h-1zM599 777h1v1h-1zM599 781h1v1h-1zM599 783h1v1h-1zM599 785h1v1h-1zM599 787h1v1h-1zM599 789h1v1h-1zM599 791h1v1h-1zM599 793h1v1h-1zM599 805h1v1h-1zM599 807h1v1h-1zM599 809h1v1h-1zM599 811h1v1h-1zM599 813h1v1h-1zM599 815h1v1h-1zM599 817h1v1h-1zM599 821h1v1h-1zM599 823h1v1h-1zM599 825h1v1h-1zM599 827h1v1h-1zM601 633h1v1h-1zM601 637h1v1h-1zM601 639h1v1h-1zM601 641h1v1h-1zM601 643h1v1h-1zM601 645h1v1h-1zM601 647h1v1h-1zM601 649h1v1h-1zM601 651h1v1h-1zM601 653h1v1h-1zM601 655h1v1h-1zM601 657h1v1h-1zM601 659h1v1h-1zM601 661h1v1h-1zM601 663h1v1h-1zM601 665h1v1h-1zM601 667h1v1h-1zM601 669h1v1h-1zM601 671h1v1h-1zM601 673h1v1h-1zM601 675h1v1h-1zM601 677h1v1h-1zM601 679h1v1h-1zM601 681h1v1h-1zM603 347h1v1h-1zM603 349h1v1h-1zM603 351h1v1h-1zM603 353h1v1h-1zM603 355h1v1h-1zM603 357h1v1h-1zM603 359h1v1h-1zM603 361h1v1h-1zM603 363h1v1h-1zM603 365h1v1h-1zM603 367h1v1h-1zM603 369h1v1h-1zM603 371h1v1h-1zM603 373h1v1h-1zM603 375h1v1h-1zM603 377h1v1h-1zM603 379h1v1h-1zM603 381h1v1h-1zM603 383h1v1h-1zM603 385h1v1h-1zM603 387h1v1h-1zM603 389h1v1h-1zM603 391h1v1h-1zM603 393h1v1h-1zM603 395h1v1h-1zM603 397h1v1h-1zM603 399h1v1h-1zM603 401h1v1h-1zM603 403h1v1h-1zM603 405h1v1h-1zM603 407h1v1h-1zM603 409h1v1h-1zM603 411h1v1h-1zM603 413h1v1h-1zM603 415h1v1h-1zM603 417h1v1h-1zM603 419h1v1h-1zM603 421h1v1h-1zM603 423h1v1h-1zM603 425h1v1h-1zM603 427h1v1h-1zM603 429h1v1h-1zM603 431h1v1h-1zM603 433h1v1h-1zM603 435h1v1h-1zM603 437h1v1h-1zM603 439h1v1h-1zM603 441h1v1h-1zM603 443h1v1h-1zM603 445h1v1h-1zM603 447h1v1h-1zM603 449h1v1h-1zM603 451h1v1h-1zM603 453h1v1h-1zM603 455h1v1h-1zM603 457h1v1h-1zM603 459h1v1h-1zM603 461h1v1h-1zM603 463h1v1h-1zM603 465h1v1h-1zM603 467h1v1h-1zM603 469h1v1h-1zM603 471h1v1h-1zM603 473h1v1h-1zM603 475h1v1h-1zM603 477h1v1h-1zM603 479h1v1h-1zM603 481h1v1h-1zM603 483h1v1h-1zM603 485h1v1h-1zM603 487h1v1h-1zM603 489h1v1h-1zM603 491h1v1h-1zM603 493h1v1h-1zM603 495h1v1h-1zM603 497h1v1h-1zM603 499h1v1h-1zM603 501h1v1h-1zM603 503h1v1h-1zM603 505h1v1h-1zM603 507h1v1h-1zM603 509h1v1h-1zM603 511h1v1h-1zM603 513h1v1h-1zM603 515h1v1h-1zM603 517h1v1h-1zM603 519h1v1h-1zM603 521h1v1h-1zM603 523h1v1h-1zM603 525h1v1h-1zM603 527h1v1h-1zM603 529h1v1h-1zM603 531h1v1h-1zM603 533h1v1h-1zM603 535h1v1h-1zM603 537h1v1h-1zM603 539h1v1h-1zM603 541h1v1h-1zM603 543h1v1h-1zM603 545h1v1h-1zM603 547h1v1h-1zM603 549h1v1h-1zM603 551h1v1h-1zM605 347h1v1h-1zM605 349h1v1h-1zM605 351h1v1h-1zM605 353h1v1h-1zM605 355h1v1h-1zM605 357h1v1h-1zM605 359h1v1h-1zM605 361h1v1h-1zM605 363h1v1h-1zM605 365h1v1h-1zM605 367h1v1h-1zM605 369h1v1h-1zM605 371h1v1h-1zM605 373h1v1h-1zM605 375h1v1h-1zM605 377h1v1h-1zM605 379h1v1h-1zM605 381h1v1h-1zM605 383h1v1h-1zM605 385h1v1h-1zM605 387h1v1h-1z" fill="#00e000"/></svg>
<div class="a chk" style="left:870px;top:334px;width:20px;height:508px"></div>
<div class="a" style="left:870px;top:334px;width:20px;height:23px;background:#c0c0c0;border-style:solid;border-width:1px;border-color:#c0c0c0 #000 #000 #c0c0c0"></div>
<div class="a" style="left:871px;top:335px;width:18px;height:21px;border-style:solid;border-width:1px;border-color:#fff #808080 #808080 #fff"></div>
<svg class="a" style="left:875px;top:341px" width="10" height="6" viewBox="0 0 10 6" shape-rendering="crispEdges"><path d="M4 0h1v1h1v1h1v1h1v1h1v1h-9v-1h1v-1h1v-1h1v-1h1z" fill="#000"/></svg>
<div class="a" style="left:870px;top:688px;width:20px;height:89px;background:#c0c0c0;border-style:solid;border-width:1px;border-color:#c0c0c0 #000 #000 #c0c0c0"></div>
<div class="a" style="left:871px;top:689px;width:18px;height:87px;border-style:solid;border-width:1px;border-color:#fff #808080 #808080 #fff"></div>
<div class="a" style="left:870px;top:819px;width:20px;height:23px;background:#c0c0c0;border-style:solid;border-width:1px;border-color:#c0c0c0 #000 #000 #c0c0c0"></div>
<div class="a" style="left:871px;top:820px;width:18px;height:21px;border-style:solid;border-width:1px;border-color:#fff #808080 #808080 #fff"></div>
<svg class="a" style="left:875px;top:828px" width="10" height="6" viewBox="0 0 10 6" shape-rendering="crispEdges"><path d="M0 0h9v1h-1v1h-1v1h-1v1h-1v1h-1v-1h-1v-1h-1v-1h-1v-1h-1z" fill="#000"/></svg>
<div class="a chk" style="left:18px;top:842px;width:852px;height:20px"></div>
<div class="a" style="left:18px;top:842px;width:23px;height:20px;background:#c0c0c0;border-style:solid;border-width:1px;border-color:#c0c0c0 #000 #000 #c0c0c0"></div>
<div class="a" style="left:19px;top:843px;width:21px;height:18px;border-style:solid;border-width:1px;border-color:#fff #808080 #808080 #fff"></div>
<svg class="a" style="left:25px;top:847px" width="6" height="10" viewBox="0 0 6 10" shape-rendering="crispEdges"><path d="M4 0h1v9h-1v-1h-1v-1h-1v-1h-1v-1h-1v-1h1v-1h1v-1h1v-1h1z" fill="#000"/></svg>
<div class="a" style="left:74px;top:842px;width:176px;height:20px;background:#c0c0c0;border-style:solid;border-width:1px;border-color:#c0c0c0 #000 #000 #c0c0c0"></div>
<div class="a" style="left:75px;top:843px;width:174px;height:18px;border-style:solid;border-width:1px;border-color:#fff #808080 #808080 #fff"></div>
<div class="a" style="left:847px;top:842px;width:23px;height:20px;background:#c0c0c0;border-style:solid;border-width:1px;border-color:#c0c0c0 #000 #000 #c0c0c0"></div>
<div class="a" style="left:848px;top:843px;width:21px;height:18px;border-style:solid;border-width:1px;border-color:#fff #808080 #808080 #fff"></div>
<svg class="a" style="left:856px;top:847px" width="6" height="10" viewBox="0 0 6 10" shape-rendering="crispEdges"><path d="M0 0h1v1h1v1h1v1h1v1h1v1h-1v1h-1v1h-1v1h-1v1h-1z" fill="#000"/></svg>
<div class="t" style="left:48.00px;top:57.00px;color:#000"><u style="text-underline-offset:2px">H</u>elp</div>
<div class="t" style="left:122.00px;top:57.00px;color:#000;transform:scaleX(0.9865)">Browse for</div>
<div class="t" style="left:204.00px;top:54.50px;color:#b40000;transform:scaleX(0.9717)">K:\DemoRawImages\RawDemo_D200_2.NEF</div>
<div class="t" style="left:735.60px;top:57.00px;color:#000;transform:scaleX(1.0590)">Process</div>
<div class="t" style="left:827.00px;top:57.00px;color:#000;transform:scaleX(0.9637)">FINISH</div>
<div class="t" style="left:119.00px;top:91.50px;color:#006400;transform:scaleX(0.9887)">Black point</div>
<div class="t" style="left:218.00px;top:121.00px;color:#b40000;transform:scaleX(1.0500)">0</div>
<div class="t" style="left:225.00px;top:152.00px;color:#000;transform:scaleX(1.0249)">Reset</div>
<div class="t" style="left:25.80px;top:150.00px;color:#006400;transform:scaleX(0.9556)">R</div>
<div class="t" style="left:65.70px;top:150.00px;color:#006400;transform:scaleX(0.9556)">G</div>
<div class="t" style="left:106.00px;top:150.00px;color:#006400;transform:scaleX(0.9556)">B</div>
<div class="t" style="left:23.70px;top:178.00px;color:#0000c8;transform:scaleX(0.9261)">R,G,B  #: 0, 0, 0</div>
<div class="t" style="left:23.70px;top:193.00px;color:#0000c8;transform:scaleX(0.9478)">R,G,B %: 0%, 0%, 0%</div>
<div class="t" style="left:432.70px;top:92.00px;color:#006400">Display</div>
<div class="t" style="left:329.20px;top:110.00px;color:#800000">Composite</div>
<div class="t" style="left:431.20px;top:110.00px;color:#800000">Channel</div>
<div class="t" style="left:521.00px;top:110.00px;color:#800000">Greyscale</div>
<div class="t" style="left:381.20px;top:146.00px;color:#800000;transform:scaleX(0.9812)">Exposure</div>
<div class="t" style="left:474.00px;top:144.00px;color:#800000">Histogram</div>
<div class="t" style="left:344.20px;top:178.00px;color:#006400;transform:scaleX(1.0207)">Outside range</div>
<div class="t" style="left:494.70px;top:178.00px;color:#006400">BL corrected</div>
<div class="t" style="left:348.00px;top:213.00px;color:#000;transform:scaleX(1.0333)">0</div>
<div class="t" style="left:555.20px;top:214.50px;color:#fff;transform:scaleX(1.0181)">Reset</div>
<div class="t" style="left:554.20px;top:213.50px;color:#808080;transform:scaleX(1.0181)">Reset</div>
<div class="t" style="left:727.00px;top:91.50px;color:#006400;transform:scaleX(1.0270)">White point</div>
<div class="t" style="left:830.00px;top:121.00px;color:#b40000;transform:scaleX(0.9137)">4021</div>
<div class="t" style="left:836.60px;top:152.00px;color:#000;transform:scaleX(1.0386)">Reset</div>
<div class="t" style="left:637.90px;top:150.00px;color:#006400;transform:scaleX(0.9556)">R</div>
<div class="t" style="left:678.00px;top:150.00px;color:#006400;transform:scaleX(0.9556)">G</div>
<div class="t" style="left:718.00px;top:150.00px;color:#006400;transform:scaleX(0.9556)">B</div>
<div class="t" style="left:632.20px;top:178.00px;color:#0000c8;transform:scaleX(0.9179)">R,G,B  #: 0, 2898, 0</div>
<div class="t" style="left:632.20px;top:193.00px;color:#0000c8;transform:scaleX(0.9402)">R,G,B %: 0%, 0.0568%, 0%</div>
<div class="t" style="left:30.00px;top:248.00px;color:#000080;transform:scaleX(0.9348)">NIKON D200,</div>
<div class="t" style="left:112.00px;top:248.00px;color:#000080;transform:scaleX(0.9132)">2006:03:08 12:34:49,</div>
<div class="t" style="left:223.00px;top:248.00px;color:#000080;transform:scaleX(0.8993)">3900x2616pix</div>
<div class="t" style="left:30.00px;top:263.00px;color:#000080;transform:scaleX(0.9208)">ISO 100,</div>
<div class="t" style="left:82.70px;top:263.00px;color:#000080;transform:scaleX(0.9734)">F/5,</div>
<div class="t" style="left:112.70px;top:263.00px;color:#000080;transform:scaleX(0.9450)">1/200s,</div>
<div class="t" style="left:158.30px;top:263.00px;color:#000080;transform:scaleX(0.8886)">105mm</div>
<div class="t" style="left:639.80px;top:241.50px;color:#006400;transform:scaleX(1.0318)">Mapping function</div>
<div class="t" style="left:644.70px;top:268.00px;color:#808080;transform:scaleX(0.8967)">sRGB</div>
<div class="t" style="left:21.40px;top:294.00px;color:#c81020;font-weight:bold;transform:scaleX(0.8968)">Zoom</div>
<div class="t" style="left:27.90px;top:309.00px;color:#c81020;font-weight:bold;transform:scaleX(0.9567)">1:1</div>
</body></html>
